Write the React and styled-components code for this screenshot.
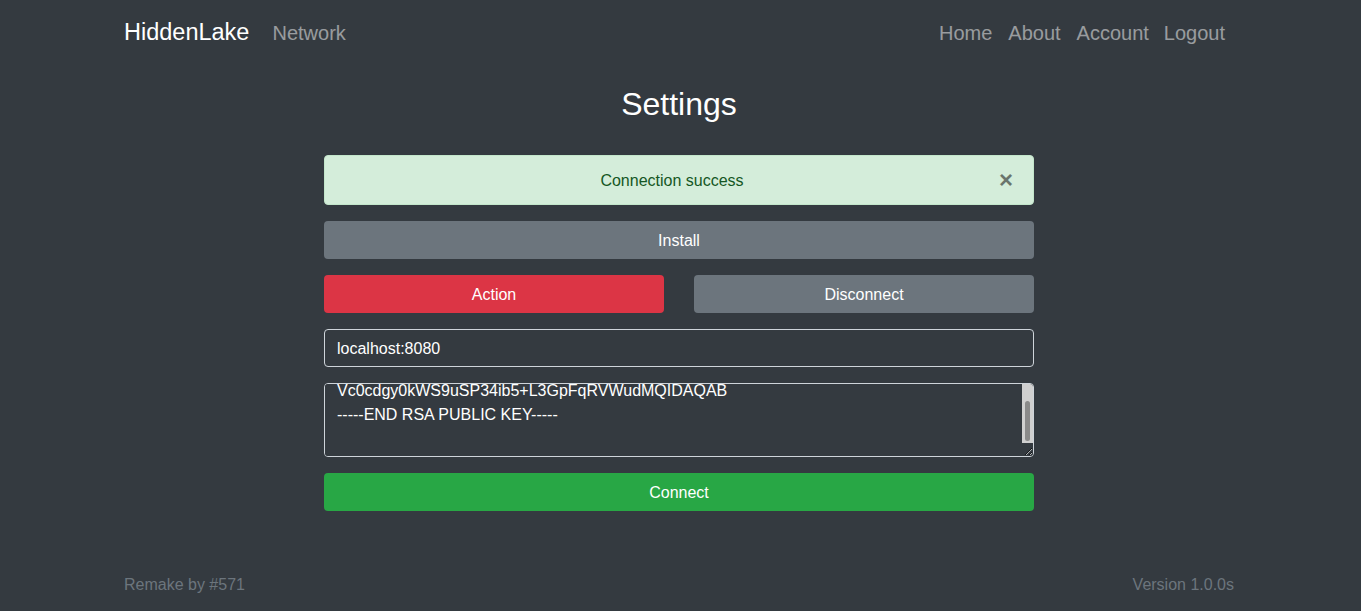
import React, { useEffect, useRef } from "react";
import styled, { createGlobalStyle } from "styled-components";

const GlobalStyle = createGlobalStyle`
  html, body {
    margin: 0;
    padding: 0;
    background: #343a40;
  }
  body {
    font-family: "Liberation Sans", Arial, sans-serif;
    font-size: 16px;
    line-height: 1.5;
    color: #fff;
    padding-right: 3px;
  }
  * {
    box-sizing: border-box;
  }
`;

const Page = styled.div`
  min-height: 100vh;
  display: flex;
  flex-direction: column;
`;

const Wrap = styled.div`
  width: 1110px;
  margin: 0 auto;
`;

const NavBar = styled.nav`
  height: 66px;
  display: flex;
  align-items: center;
  justify-content: space-between;
`;

const NavGroup = styled.div`
  display: flex;
  align-items: center;
`;

const Brand = styled.a`
  font-size: 23.5px;
  color: #fff;
  text-decoration: none;
  margin-right: 16px;
`;

const NavLink = styled.a`
  font-size: 20px;
  color: rgba(255, 255, 255, 0.5);
  text-decoration: none;
  padding: 0 8px;
  &:last-child {
    padding-left: 7px;
    padding-right: 9px;
  }
`;

const Main = styled.main`
  flex: 1;
  display: flex;
  flex-direction: column;
  align-items: center;
`;

const Title = styled.h2`
  margin: 19px 0 32px;
  font-size: 32px;
  font-weight: 400;
  line-height: 1.2;
`;

const Form = styled.div`
  width: 710px;
  display: flex;
  flex-direction: column;
  gap: 16px;
`;

const Alert = styled.div`
  position: relative;
  height: 50px;
  display: flex;
  align-items: center;
  justify-content: center;
  padding: 2px 34px 0 20px;
  background: #d4edda;
  border: 1px solid #c3e6cb;
  border-radius: 4px;
  color: #155724;
`;

const Close = styled.span`
  position: absolute;
  right: 20px;
  top: 50%;
  transform: translateY(-50%);
  font-size: 24px;
  font-weight: 700;
  line-height: 1;
  color: #000;
  opacity: 0.5;
`;

const Row = styled.div`
  display: flex;
  gap: 30px;
`;

const Button = styled.button`
  flex: ${({ $grow }) => ($grow ? "1" : "none")};
  height: 38px;
  padding: 2px 0 0;
  border: none;
  border-radius: 4px;
  font-family: inherit;
  font-size: 16px;
  color: #fff;
  background: ${({ $variant }) =>
    $variant === "danger" ? "#dc3545" : $variant === "success" ? "#28a745" : "#6c757d"};
`;

const Input = styled.input`
  height: 38px;
  padding: 8px 12px 6px;
  border: 1px solid #ced4da;
  border-radius: 4px;
  background: #343a40;
  color: #fff;
  font-family: inherit;
  font-size: 16px;
  outline: none;
`;

const KeyBox = styled.div`
  position: relative;
  height: 74px;
  display: flex;
`;

const TextArea = styled.textarea`
  flex: 1;
  height: 74px;
  padding: 6px 12px 5px;
  border: 1px solid #ced4da;
  border-radius: 4px;
  background: #343a40;
  color: #fff;
  font-family: inherit;
  font-size: 16px;
  line-height: 24px;
  outline: none;
  white-space: pre;
  overflow-x: hidden;
  scrollbar-width: none;
  &::-webkit-scrollbar {
    display: none;
  }
`;

/* scrollbar drawn over the textarea's right edge */
const ScrollTrack = styled.div`
  position: absolute;
  top: 1px;
  right: 1px;
  width: 11px;
  height: 59px;
  background: #d0d0d0;
  border-top-right-radius: 3px;
  pointer-events: none;
`;

const ScrollThumb = styled.div`
  position: absolute;
  left: 3px;
  right: 3px;
  bottom: 2px;
  height: 40px;
  border-radius: 3px;
  background: #8a8a8a;
`;

const Footer = styled.footer`
  height: 54px;
  display: flex;
  justify-content: space-between;
  align-items: flex-start;
  padding-top: 16px;
  color: #6c757d;
`;

const KEY =
  "MIIBCgKCAQEAx8nT1qA4Lw9rJb2KdZp\n" +
  "Vc0cdgy0kWS9uSP34ib5+L3GpFqRVWudMQIDAQAB\n" +
  "-----END RSA PUBLIC KEY-----\n";

const App = () => {
  const keyRef = useRef(null);

  useEffect(() => {
    if (keyRef.current) keyRef.current.scrollTop = keyRef.current.scrollHeight;
  }, []);

  return (
    <Page>
      <GlobalStyle />
      <Wrap>
        <NavBar>
          <NavGroup>
            <Brand>HiddenLake</Brand>
            <NavLink>Network</NavLink>
          </NavGroup>
          <NavGroup>
            <NavLink>Home</NavLink>
            <NavLink>About</NavLink>
            <NavLink>Account</NavLink>
            <NavLink>Logout</NavLink>
          </NavGroup>
        </NavBar>
      </Wrap>
      <Main>
        <Title>Settings</Title>
        <Form>
          <Alert>
            Connection success
            <Close>×</Close>
          </Alert>
          <Button>Install</Button>
          <Row>
            <Button $grow $variant="danger">Action</Button>
            <Button $grow>Disconnect</Button>
          </Row>
          <Input defaultValue="localhost:8080" />
          <KeyBox>
            <TextArea ref={keyRef} defaultValue={KEY} />
            <ScrollTrack>
              <ScrollThumb />
            </ScrollTrack>
          </KeyBox>
          <Button $variant="success">Connect</Button>
        </Form>
      </Main>
      <Wrap>
        <Footer>
          <span>Remake by #571</span>
          <span>Version 1.0.0s</span>
        </Footer>
      </Wrap>
    </Page>
  );
};

export default App;
